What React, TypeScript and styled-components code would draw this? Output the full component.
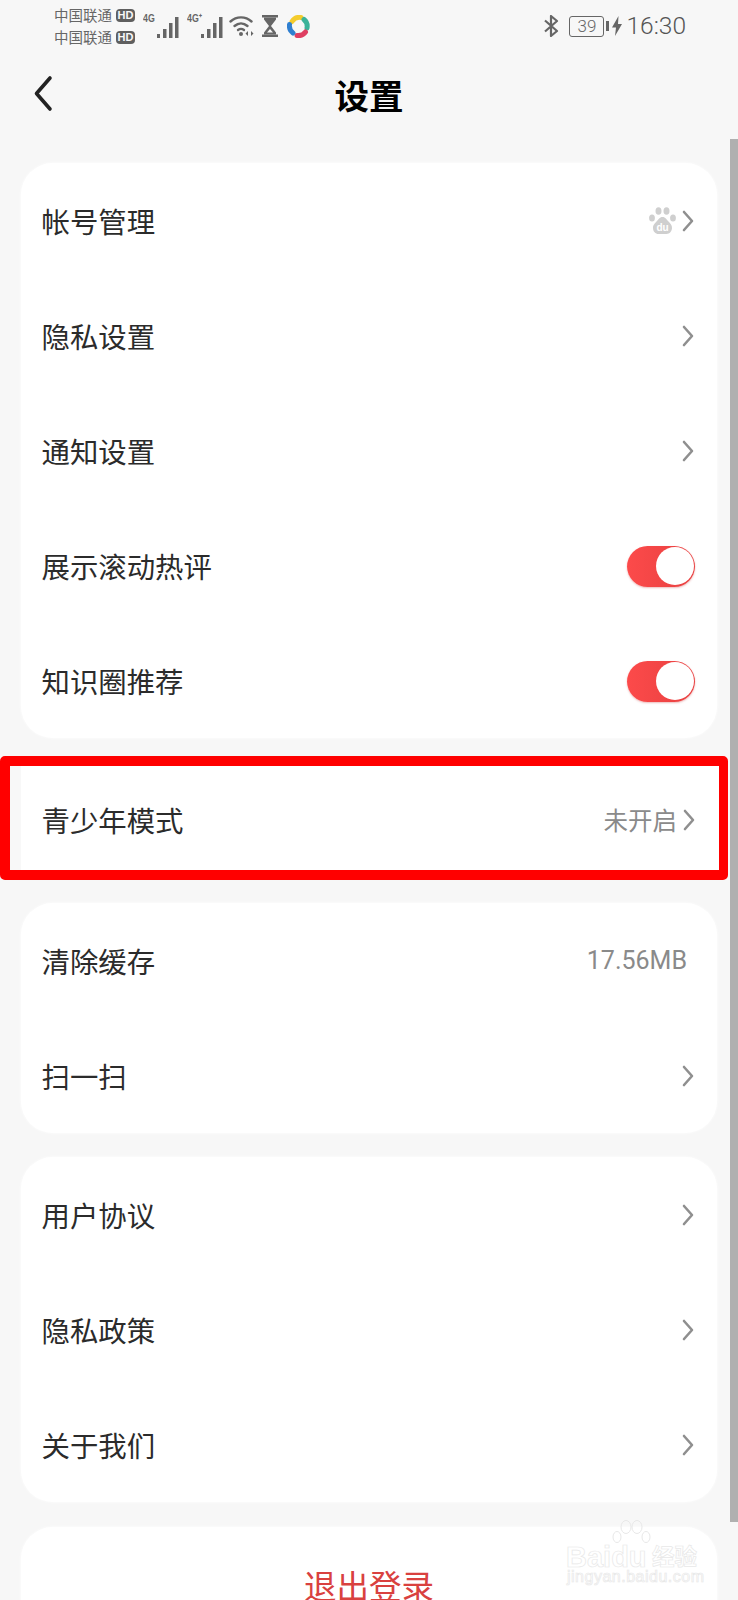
import React from 'react'
import styled, { createGlobalStyle } from 'styled-components'

const CJK = '"Noto Sans CJK SC", "Noto Sans", sans-serif'

const GlobalStyle = createGlobalStyle`
  html, body {
    margin: 0;
    padding: 0;
    background: #f7f7f7;
  }
  * {
    box-sizing: border-box;
  }
`

const Page = styled.div`
  position: relative;
  width: 738px;
  height: 1600px;
  overflow: hidden;
  background: #f7f7f7;
  font-family: ${CJK};
`

const StatusBar = styled.div`
  display: flex;
  align-items: center;
  justify-content: space-between;
  height: 52px;
  padding: 0 52px 0 54px;
  color: #666;
`

const StatusGroup = styled.div`
  display: flex;
  align-items: center;
`

const Carriers = styled.div`
  display: flex;
  flex-direction: column;
  margin-right: 8px;
`

const Carrier = styled.div`
  display: flex;
  align-items: center;
  gap: 4px;
  height: 22px;
  font-size: 14.5px;
  line-height: 22px;
  white-space: nowrap;
`

const HdBadge = styled.span`
  display: inline-block;
  width: 19px;
  height: 13px;
  border-radius: 4px;
  background: #5f5f5f;
  color: #f7f7f7;
  font-family: "Liberation Sans", sans-serif;
  font-size: 11px;
  font-weight: 700;
  line-height: 13px;
  text-align: center;
`

const SignalWrap = styled.div<{ $gap: number }>`
  position: relative;
  width: 36px;
  height: 24px;
  margin-right: ${p => p.$gap}px;
`

const SignalLabel = styled.span`
  position: absolute;
  left: 0;
  top: -2px;
  font-family: "Liberation Sans", sans-serif;
  font-size: 11px;
  font-weight: 700;
  line-height: 13px;
  transform: scaleX(0.8);
  transform-origin: left;
`

const SignalBars = styled.svg`
  position: absolute;
  right: 0;
  bottom: 0;
`

const Clock = styled.span`
  margin-left: 4px;
  font-family: Roboto, "Liberation Sans", sans-serif;
  font-size: 24.5px;
  font-weight: 300;
  line-height: 28px;
  color: #555;
`

const BatteryBody = styled.span`
  display: block;
  width: 35px;
  height: 21px;
  border: 1.5px solid #666;
  border-radius: 3px;
  font-family: Roboto, "Liberation Sans", sans-serif;
  font-size: 17px;
  font-weight: 300;
  line-height: 18px;
  text-align: center;
`

const BatteryTip = styled.span`
  display: block;
  width: 3px;
  height: 10px;
  margin: 0 3px 0 2px;
  background: #666;
`

const NavBar = styled.div`
  display: flex;
  align-items: center;
  justify-content: center;
  position: relative;
  height: 88px;
  padding-bottom: 4px;
`

const BackIcon = styled.svg`
  position: absolute;
  left: 33px;
  top: 23px;
`

const Title = styled.h1`
  margin: 0;
  color: #000;
  font-size: 34.5px;
  font-weight: 700;
  line-height: 46px;
`

const Content = styled.div`
  display: flex;
  flex-direction: column;
  padding-top: 23px;
`

const Card = styled.div<{ $gap?: number }>`
  margin: ${p => p.$gap ?? 0}px 21px 0;
  border-radius: 32px;
  background: #fff;
  box-shadow: 0 0 3px #fff;
`

const HighlightBox = styled.div`
  width: 728px;
  height: 124px;
  margin-top: 18px;
  padding-left: 11px;
  border: 10px solid #f00;
  border-radius: 5px;
  background: #f8f8f8;
`

const HighlightRow = styled.div`
  height: 104px;
  margin-right: -1px;
  padding: 4px 24px 0 20.5px;
  display: flex;
  align-items: center;
  justify-content: space-between;
  background: #fff;
`

const Row = styled.div`
  display: flex;
  align-items: center;
  justify-content: space-between;
  height: 115px;
  padding: 1px 23px 0 20.5px;
`

const Label = styled.span`
  color: #2b2b2b;
  font-size: 28.4px;
  line-height: 40px;
`

const RowEnd = styled.div`
  display: flex;
  align-items: center;
  gap: 6px;
`

const Value = styled.span`
  color: #8a8a8a;
  font-size: 24.5px;
  line-height: 34px;
`

const CacheValue = styled(Value)`
  margin-right: 7px;
  font-family: Roboto, "Noto Sans", sans-serif;
  font-size: 25px;
`

const Toggle = styled.div`
  display: flex;
  justify-content: flex-end;
  width: 68px;
  height: 41px;
  margin-right: -1px;
  padding: 1.5px;
  border-radius: 21px;
  background: linear-gradient(90deg, #fc4a4a, #e84141);
  box-shadow: 0 1px 2px rgba(200, 60, 60, 0.35);
`

const Knob = styled.div`
  width: 38px;
  height: 38px;
  border-radius: 50%;
  background: #fff;
`

const Logout = styled.div`
  display: flex;
  align-items: center;
  justify-content: center;
  height: 115px;
  color: #d9413f;
  font-size: 32.5px;
  line-height: 44px;
`

const Scrollbar = styled.div`
  position: absolute;
  top: 139px;
  right: 0;
  width: 8px;
  height: 1383px;
  background: #b0b0b0;
`

const Watermark = styled.div`
  position: absolute;
  left: 566px;
  top: 1518px;
  width: 134px;
  height: 66px;
  color: transparent;
  -webkit-text-stroke: 0.7px #e8e8e8;
  font-family: "Liberation Sans", sans-serif;
  white-space: nowrap;
`

const WatermarkBrand = styled.span`
  position: absolute;
  left: 0;
  top: 22px;
  font-size: 29px;
  font-weight: 700;
  line-height: 34px;
`

const WatermarkPaw = styled.svg`
  position: absolute;
  left: 46px;
  top: 2px;
`

const WatermarkJingyan = styled.span`
  position: absolute;
  left: 86px;
  top: 23px;
  font-family: ${CJK};
  font-size: 22.5px;
  font-weight: 700;
  line-height: 28px;
`

const WatermarkUrl = styled.span`
  position: absolute;
  left: 1px;
  top: 50px;
  font-size: 16px;
  line-height: 18px;
  letter-spacing: 0.5px;
`

const Chevron = () => (
  <svg width="12" height="24" viewBox="0 0 12 24" fill="none">
    <path d="M2 3l8 9-8 9" stroke="#8f8f8f" strokeWidth="2.6" strokeLinecap="round" strokeLinejoin="round" />
  </svg>
)

const PawIcon = () => (
  <svg width="27" height="28" viewBox="0 0 27 28" fill="#cfcfcf">
    <ellipse cx="9.5" cy="4" rx="3" ry="3.8" />
    <ellipse cx="17.5" cy="4" rx="3" ry="3.8" />
    <ellipse cx="3" cy="11" rx="2.9" ry="3.5" />
    <ellipse cx="24" cy="11" rx="2.9" ry="3.5" />
    <path d="M13.5 10c3 0 4 2.500 6 4.500 2 2 3.500 3.500 3.500 6.500s-2.500 6-5.500 6h-8c-3 0-5.500-2.500-5.500-6s2-4.500 3.500-6.500c2-2 3-4.500 6-4.500z" />
    <text x="13.500" y="24" textAnchor="middle" fontFamily="Liberation Sans, sans-serif" fontSize="10" fontWeight="700" fill="#fff">du</text>
  </svg>
)

const Signal = ({ label, gap }: { label: string; gap: number }) => (
  <SignalWrap $gap={gap}>
    <SignalLabel>{label}</SignalLabel>
    <SignalBars width="22" height="21" viewBox="0 0 22 21" fill="#666">
      <rect x="0" y="17" width="3" height="4" />
      <rect x="6" y="12" width="3.500" height="9" />
      <rect x="12" y="6" width="3.500" height="15" />
      <rect x="18" y="0" width="3.500" height="21" />
    </SignalBars>
  </SignalWrap>
)

const WifiIcon = () => (
  <svg width="26" height="22" viewBox="0 0 26 22" fill="none" stroke="#666" strokeWidth="2.4" strokeLinecap="round" style={{ marginRight: 7 }}>
    <path d="M1.500 6.500C7.500 1 16.500 1 22.500 6.500" />
    <path d="M5.500 11c4-3.500 9-3.500 13 0" />
    <path d="M9 15c2-1.500 4-1.500 6 0" />
    <circle cx="12" cy="19" r="2" fill="#666" stroke="none" />
    <path d="M19 16v5l-2.500-2.500zM22 16v5l2.500-2.500z" fill="#666" stroke="none" />
  </svg>
)

const HourglassIcon = () => (
  <svg width="16" height="22" viewBox="0 0 16 22" fill="#666" style={{ marginRight: 9 }}>
    <rect x="0" y="0" width="16" height="2.500" />
    <rect x="0" y="19.500" width="16" height="2.500" />
    <path d="M2 2.500h12v2L9 11l5 6.500v2H2v-2L7 11 2 4.500z" />
    <path d="M5 17.500l3-3.500 3 3.500z" fill="#f7f7f7" />
  </svg>
)

const AppLogo = () => (
  <svg width="23" height="23" viewBox="0 0 23 23" fill="none" strokeWidth="5" strokeLinecap="round">
    <path d="M5 6.500A9 9 0 0 1 14 2.500" stroke="#f4cc2e" />
    <path d="M17 4.500A9 9 0 0 1 20 13" stroke="#3bb39a" />
    <path d="M18.500 17A9 9 0 0 1 10 20.500" stroke="#df3f62" />
    <path d="M6 18A9 9 0 0 1 2.500 9.500" stroke="#2f7fd0" />
  </svg>
)

const BluetoothIcon = () => (
  <svg width="15" height="22" viewBox="0 0 15 22" fill="none" stroke="#666" strokeWidth="2.200" strokeLinejoin="round" style={{ marginRight: 10 }}>
    <path d="M1 5.500l12 10.500-6 5V1l6 5L1 16.500" />
  </svg>
)

const BoltIcon = () => (
  <svg width="10" height="20" viewBox="0 0 10 20" fill="#666">
    <path d="M6.500 0L0 11.500h4L3 20l7-12H6z" />
  </svg>
)

const BackArrow = () => (
  <BackIcon width="20" height="38" viewBox="0 0 20 38" fill="none">
    <path d="M17 3L3.500 18.500 17 34" stroke="#222" strokeWidth="3.600" strokeLinecap="round" strokeLinejoin="round" />
  </BackIcon>
)

type LinkRowProps = {
  label: string
  value?: React.ReactNode
}

const LinkRow = ({ label, value }: LinkRowProps) => (
  <Row>
    <Label>{label}</Label>
    <RowEnd>
      {value}
      <Chevron />
    </RowEnd>
  </Row>
)

const ToggleRow = ({ label }: { label: string }) => (
  <Row>
    <Label>{label}</Label>
    <Toggle>
      <Knob />
    </Toggle>
  </Row>
)

export default function App() {
  return (
    <Page>
      <GlobalStyle />
      <StatusBar>
        <StatusGroup>
          <Carriers>
            <Carrier>
              中国联通 <HdBadge>HD</HdBadge>
            </Carrier>
            <Carrier>
              中国联通 <HdBadge>HD</HdBadge>
            </Carrier>
          </Carriers>
          <Signal label="4G" gap={8} />
          <Signal label="4G⁺" gap={6} />
          <WifiIcon />
          <HourglassIcon />
          <AppLogo />
        </StatusGroup>
        <StatusGroup>
          <BluetoothIcon />
          <BatteryBody>39</BatteryBody>
          <BatteryTip />
          <BoltIcon />
          <Clock>16:30</Clock>
        </StatusGroup>
      </StatusBar>
      <NavBar>
        <BackArrow />
        <Title>设置</Title>
      </NavBar>
      <Content>
        <Card>
          <LinkRow label="帐号管理" value={<PawIcon />} />
          <LinkRow label="隐私设置" />
          <LinkRow label="通知设置" />
          <ToggleRow label="展示滚动热评" />
          <ToggleRow label="知识圈推荐" />
        </Card>
        <HighlightBox>
          <HighlightRow>
            <Label>青少年模式</Label>
            <RowEnd>
              <Value>未开启</Value>
              <Chevron />
            </RowEnd>
          </HighlightRow>
        </HighlightBox>
        <Card $gap={23}>
          <Row>
            <Label>清除缓存</Label>
            <CacheValue>17.56MB</CacheValue>
          </Row>
          <LinkRow label="扫一扫" />
        </Card>
        <Card $gap={24}>
          <LinkRow label="用户协议" />
          <LinkRow label="隐私政策" />
          <LinkRow label="关于我们" />
        </Card>
        <Card $gap={25}>
          <Logout>退出登录</Logout>
        </Card>
      </Content>
      <Scrollbar />
      <Watermark>
        <WatermarkPaw width="40" height="46" viewBox="0 0 40 46" fill="none" stroke="#e8e8e8" strokeWidth="1">
          <ellipse cx="14" cy="7" rx="5" ry="6.500" />
          <ellipse cx="25" cy="7" rx="5" ry="6.500" />
          <ellipse cx="5" cy="17" rx="4" ry="5.500" />
          <ellipse cx="34" cy="17" rx="4" ry="5.500" />
        </WatermarkPaw>
        <WatermarkBrand>Baidu</WatermarkBrand>
        <WatermarkJingyan>经验</WatermarkJingyan>
        <WatermarkUrl>jingyan.baidu.com</WatermarkUrl>
      </Watermark>
    </Page>
  )
}
